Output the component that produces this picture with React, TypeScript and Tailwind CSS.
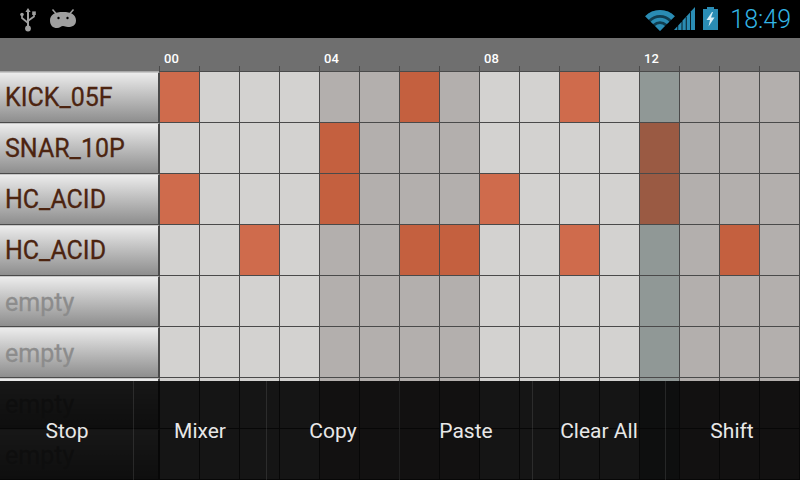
const rows: [string, number[]][] = [
  ["KICK_05F", [0, 6, 10]],
  ["SNAR_10P", [4, 12]],
  ["HC_ACID", [0, 4, 8, 12]],
  ["HC_ACID", [2, 6, 7, 10, 14]],
  ["empty", []],
  ["empty", []],
  ["empty", []],
  ["empty", []],
];
const cols = Array.from({ length: 16 }, (_, i) => i);
const menu = ["Stop", "Mixer", "Copy", "Paste", "Clear All", "Shift"];

function cellClass(c: number, on: boolean) {
  if (c === 12) return on ? "bg-[#9a5a43]" : "bg-[#909896]";
  const dark = (c >= 4 && c <= 7) || c >= 13;
  if (dark) return on ? "bg-[#c4603f]" : "bg-[#b3afad]";
  return on ? "bg-[#cf6b4c]" : "bg-[#d3d2d0]";
}

function Usb() {
  return (
    <svg width="16" height="24" viewBox="0 0 16 24" className="text-[#a0a0a0]">
      <path d="M8 0 L10.6 4 H9 V18 H7 V4 H5.4 Z" fill="currentColor" />
      <circle cx="8" cy="20.5" r="2.9" fill="currentColor" />
      <path d="M2 7 V10 L7.5 14.5 M14 6 V8.5 L8.5 12.5" stroke="currentColor" strokeWidth="1.7" fill="none" />
      <circle cx="2" cy="6.5" r="1.8" fill="currentColor" />
      <rect x="12.2" y="3.4" width="3.6" height="3.6" fill="currentColor" />
    </svg>
  );
}

function Droid() {
  return (
    <svg width="26" height="20" viewBox="0 0 26 20">
      <path d="M2.5 0.5 L6 4.5 M23.5 0.5 L20 4.5" stroke="#a0a0a0" strokeWidth="1.5" />
      <path d="M0 11.5 C0 5.5 5 3 13 3 C21 3 26 5.5 26 11.5 C26 16.5 22 18 18 18 C15.5 18 15 17 13 17 C11 17 10 19 7 19 C3 19 0 16.5 0 11.5 Z" fill="#a0a0a0" />
      <circle cx="8.5" cy="9" r="1.2" fill="#000" />
      <circle cx="17.5" cy="9" r="1.2" fill="#000" />
    </svg>
  );
}

function Wifi() {
  return (
    <svg width="30" height="22" viewBox="0 0 30 22" fill="none">
      <path d="M15 22 L0.15 7.15 A21 21 0 0 1 29.85 7.15 Z" fill="#103d50" />
      <path d="M1.92 8.92 A18.5 18.5 0 0 1 28.08 8.92" stroke="#2a8cb4" strokeWidth="5" />
      <path d="M6.87 13.87 A11.5 11.5 0 0 1 23.13 13.87" stroke="#2a8cb4" strokeWidth="3.5" />
      <path d="M15 22 L10.05 17.05 A7 7 0 0 1 19.95 17.05 Z" fill="#2a8cb4" />
    </svg>
  );
}

function Signal() {
  return (
    <svg width="21" height="23" viewBox="0 0 21 23" fill="#2a8cb4">
      <path d="M0 23 L3.4 19.3 V23 Z" />
      <path d="M4.2 23 V18.4 L7.6 14.7 V23 Z" />
      <path d="M8.4 23 V13.8 L11.8 10.1 V23 Z" />
      <path d="M12.6 23 V9.2 L16 5.5 V23 Z" />
      <path d="M16.8 23 V4.6 L21 0 V23 Z" />
    </svg>
  );
}

function Battery() {
  return (
    <svg width="15" height="23" viewBox="0 0 15 23">
      <path d="M4 0 H11 V2 H15 V23 H0 V2 H4 Z" fill="#2a8cb4" />
      <path d="M9 5 L3.5 13 H7 L5.5 19.5 L11.5 10.5 H8 L10 5 Z" fill="#d8eef6" />
    </svg>
  );
}

export default function App() {
  return (
    <div className="relative w-[800px] h-[480px] overflow-hidden bg-[#4a4a4a] font-['Roboto',sans-serif]">
      <div className="h-[38px] bg-black flex items-start justify-between">
        <div className="flex items-start pl-[20px]">
          <div className="mt-[8px]"><Usb /></div>
          <div className="mt-[9px] ml-[14px]"><Droid /></div>
        </div>
        <div className="flex items-start pr-[9px]">
          <div className="mt-[9px]"><Wifi /></div>
          <div className="mt-[7px] ml-[-1px]"><Signal /></div>
          <div className="mt-[7px] ml-[8px]"><Battery /></div>
          <span className="mt-[7px] ml-[12px] text-[25px] leading-[25px] font-light text-[#33b5e5]">18:49</span>
        </div>
      </div>

      <div className="h-[34px] bg-[#6f6f6f] flex pl-[159px] border-b border-b-[#a8a8a8]">
        <div className="flex h-[34px] border-b border-[#4a4a4a] w-[641px]">
          {cols.map((c) => (
            <div key={c} className="w-[40px] h-full relative flex items-end">
              <div className="w-px h-[5px] bg-[#4a4a4a]" />
              {c % 4 === 0 && (
                <span className="absolute left-[5px] top-[14px] text-[13px] leading-none font-medium text-white">
                  {String(c).padStart(2, "0")}
                </span>
              )}
            </div>
          ))}
        </div>
      </div>

      {rows.map(([name, on], r) => (
        <div key={r} className="flex h-[51px]">
          <div className="w-[160px] h-full border-r-2 border-r-[#4a4a4a] border-b border-b-[#4a4a4a] border-t border-t-[#c8c8c8] bg-gradient-to-b from-[#ececec] to-[#8e8e8e] flex items-center pl-[5px]">
            <span
              className={`text-[25px] leading-none [-webkit-text-stroke:0.3px_currentColor] ${
                name === "empty" ? "text-[#8c8c8c] translate-y-[1px]" : "text-[#4c2410]"
              }`}
            >
              {name}
            </span>
          </div>
          {cols.map((c) => (
            <div
              key={c}
              className={`w-[40px] h-full border-r border-b border-[#4a4a4a] ${cellClass(c, on.includes(c))}`}
            />
          ))}
        </div>
      ))}

      <div className="absolute left-0 right-0 top-[381px] h-[99px] bg-[#000000]/90 flex pl-[1px] pr-[2px]">
        {menu.map((m) => (
          <div
            key={m}
            className="flex-1 flex items-center justify-center pt-[3px] border-l border-white/10 first:border-l-0 text-[21px] text-[#e8e8e8]"
          >
            {m}
          </div>
        ))}
      </div>
    </div>
  );
}
